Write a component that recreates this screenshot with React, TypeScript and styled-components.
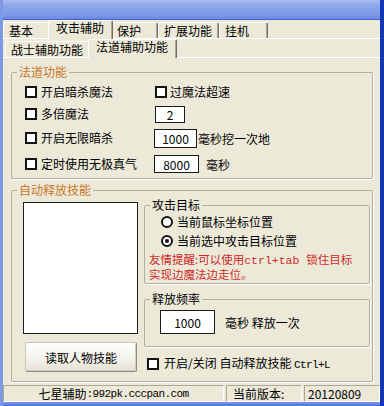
import React from "react";
import styled, { createGlobalStyle } from "styled-components";

const CJK = `"Noto Sans CJK SC", "Noto Sans", sans-serif`;
const MONO = `"Liberation Mono", "DejaVu Sans Mono", monospace`;

const GlobalStyle = createGlobalStyle`
  html, body { margin: 0; padding: 0; background: #ece9d8; }
  body { font-family: ${CJK}; font-size: 12px; color: #000; }
  * { box-sizing: border-box; }
`;

const Window = styled.div`
  width: 384px;
  height: 406px;
  display: flex;
  flex-direction: column;
  background: #ece9d8;
  border-left: 3px solid #7d98e4;
  border-right: 4px solid #1236b4;
  overflow: hidden;
`;

const TitleStrip = styled.div`
  height: 20px;
  flex: none;
  background: linear-gradient(#abbef2 0%, #8fa9ec 25%, #7d9ae8 75%, #6a8ae2 100%);
  border-bottom: 1px solid #4466d4;
`;

const TabRow = styled.div<{ $sub?: boolean }>`
  height: 19px;
  flex: none;
  display: flex;
  align-items: flex-end;
  padding-left: ${(p) => (p.$sub ? 2 : 0)}px;
  border-bottom: 1px solid #fff;
`;

const Tab = styled.div<{ $active?: boolean; $min: number }>`
  position: relative;
  z-index: ${(p) => (p.$active ? 2 : 1)};
  min-width: ${(p) => p.$min + (p.$active ? 4 : 0)}px;
  height: ${(p) => (p.$active ? 19 : 16)}px;
  margin: 0 ${(p) => (p.$active ? -2 : 0)}px ${(p) => (p.$active ? -1 : 0)}px;
  padding: 0 ${(p) => (p.$active ? 8 : 6)}px 0 ${(p) => (p.$active ? 7 : 5)}px;
  background: #ece9d8;
  border-top: 1px solid #fff;
  border-left: 1px solid #fff;
  border-right: 1px solid #716f64;
  box-shadow: inset -1px 0 #aca899;
  border-radius: 2px 2px 0 0;
  line-height: ${(p) => (p.$active ? 14 : 15)}px;
  white-space: nowrap;
`;

const Content = styled.div`
  flex: 1;
  display: flex;
  flex-direction: column;
  gap: 4px;
  padding: 7px 7px 1px 8px;
  min-height: 0;
`;

const Group = styled.fieldset<{ $grow?: boolean }>`
  margin: 0;
  padding: 0;
  min-width: 0;
  border: 1px solid #b4b09f;
  border-radius: 2px;
  box-shadow: 1px 1px 0 #fff;
  flex: ${(p) => (p.$grow ? "1" : "none")};
  display: flex;
  flex-direction: column;
`;

const Legend = styled.legend<{ $accent?: boolean }>`
  margin-left: 5px;
  padding: 0 2px;
  line-height: 14px;
  font-size: 12px;
  color: ${(p) => (p.$accent ? "#c7762a" : "#000")};
`;

const MagicGrid = styled.div`
  display: grid;
  grid-template-columns: 130px auto;
  grid-template-rows: 22px 22px 26px 26px;
  padding: 2px 0 1px 13px;
`;

const Cell = styled.div<{ $gap?: number; $shift?: number }>`
  display: flex;
  align-items: center;
  gap: ${(p) => p.$gap ?? 0}px;
  margin-left: ${(p) => p.$shift ?? 0}px;
`;

const CheckLabel = styled.label<{ $gap?: number }>`
  display: flex;
  align-items: center;
  gap: ${(p) => p.$gap ?? 4}px;
  line-height: 14px;
  white-space: nowrap;
`;

const Box = styled.span`
  width: 12px;
  height: 12px;
  flex: none;
  background: #fff;
  border: 2px solid #141414;
`;

const RadioDot = styled.span<{ $on?: boolean }>`
  width: 12px;
  height: 12px;
  flex: none;
  border-radius: 50%;
  border: 2px solid #141414;
  background: #fff;
  display: flex;
  align-items: center;
  justify-content: center;
  &::after {
    content: "";
    width: 4px;
    height: 4px;
    border-radius: 50%;
    background: ${(p) => (p.$on ? "#141414" : "transparent")};
  }
`;

const NumInput = styled.input<{ $w: number; $h: number }>`
  width: ${(p) => p.$w}px;
  height: ${(p) => p.$h}px;
  padding: 0;
  margin: 0;
  border: 1px solid #1a1a1a;
  background: #fff;
  text-align: center;
  font-family: ${CJK};
  font-size: 12px;
  color: #000;
  outline: none;
`;

const AutoBody = styled.div`
  flex: 1;
  display: grid;
  grid-template-columns: 115px 1fr;
  column-gap: 6px;
  padding: 1px 2px 0 11px;
`;

const LeftCol = styled.div`
  display: flex;
  flex-direction: column;
  padding-top: 4px;
  gap: 8px;
`;

const ListBox = styled.div`
  height: 132px;
  background: #fff;
  border: 1px solid #1e1e1e;
`;

const Button = styled.button`
  height: 30px;
  margin: 0 1px 0 2px;
  font-family: ${CJK};
  font-size: 12px;
  color: #000;
  background: linear-gradient(#fdfdfb, #f3f2ec 55%, #e4e1d3);
  border: 1px solid #c9c6b6;
  border-right-color: #8d8a7c;
  border-bottom-color: #8d8a7c;
  border-radius: 2px;
  box-shadow: inset -1px -1px #d2cebe;
  padding: 0;
`;

const RightCol = styled.div`
  display: flex;
  flex-direction: column;
`;

const TargetBody = styled.div`
  padding: 0 0 3px 4px;
  display: flex;
  flex-direction: column;
`;

const RadioRow = styled.label`
  height: 19px;
  display: flex;
  align-items: center;
  gap: 4px;
  padding-left: 12px;
  line-height: 14px;
`;

const Hint = styled.div`
  margin-top: 3px;
  line-height: 12.5px;
  color: #d02a2a;
  font-size: 11.5px;
`;

const Mono = styled.span<{ $size?: number; $ls?: number }>`
  font-family: ${MONO};
  font-size: ${(p) => p.$size ?? 11}px;
  letter-spacing: ${(p) => p.$ls ?? -0.6}px;
`;

const FreqGroup = styled(Group)`
  margin-top: 8px;
`;

const FreqBody = styled.div`
  display: flex;
  align-items: center;
  gap: 10px;
  padding: 4px 0 12px 15px;
  white-space: nowrap;
`;

const BottomCheck = styled.div`
  margin-top: 7px;
  height: 20px;
  display: flex;
  align-items: center;
  padding-left: 3px;
`;

const StatusBar = styled.div`
  height: 19px;
  flex: none;
  display: flex;
  gap: 2px;
  padding-top: 2px;
`;

const Pane = styled.div<{ $w: number; $align?: string; $pl?: number }>`
  width: ${(p) => p.$w}px;
  height: 17px;
  display: flex;
  align-items: center;
  justify-content: ${(p) => p.$align ?? "flex-start"};
  padding-left: ${(p) => p.$pl ?? 0}px;
  border: 1px solid;
  border-color: #aca899 #fff #fff #aca899;
  line-height: 14px;
  white-space: nowrap;
`;

const BottomEdge = styled.div`
  height: 4px;
  flex: none;
  background: linear-gradient(#7f9ce8, #4b70dc);
`;

const Check = ({ label, gap }: { label: React.ReactNode; gap?: number }) => (
  <CheckLabel $gap={gap}>
    <Box />
    <span>{label}</span>
  </CheckLabel>
);

export default function App() {
  return (
    <>
      <GlobalStyle />
      <Window>
        <TitleStrip />
        <TabRow>
          <Tab $min={47}>基本</Tab>
          <Tab $min={47} $active>攻击辅助</Tab>
          <Tab $min={47}>保护</Tab>
          <Tab $min={47}>扩展功能</Tab>
          <Tab $min={49}>挂机</Tab>
        </TabRow>
        <TabRow $sub>
          <Tab $min={83}>战士辅助功能</Tab>
          <Tab $min={83} $active>法道辅助功能</Tab>
        </TabRow>
        <Content>
          <Group>
            <Legend $accent>法道功能</Legend>
            <MagicGrid>
              <Cell><Check label="开启暗杀魔法" /></Cell>
              <Cell><Check label="过魔法超速" gap={3} /></Cell>
              <Cell><Check label="多倍魔法" /></Cell>
              <Cell><NumInput $w={30} $h={17} value="2" readOnly /></Cell>
              <Cell><Check label="开启无限暗杀" /></Cell>
              <Cell $gap={1} $shift={-1}>
                <NumInput $w={43} $h={19} value="1000" readOnly />
                <span>毫秒挖一次地</span>
              </Cell>
              <Cell><Check label="定时使用无极真气" /></Cell>
              <Cell $gap={7} $shift={-1}>
                <NumInput $w={45} $h={18} value="8000" readOnly />
                <span>毫秒</span>
              </Cell>
            </MagicGrid>
          </Group>
          <Group $grow>
            <Legend $accent>自动释放技能</Legend>
            <AutoBody>
              <LeftCol>
                <ListBox />
                <Button>读取人物技能</Button>
              </LeftCol>
              <RightCol>
                <Group>
                  <Legend>攻击目标</Legend>
                  <TargetBody>
                    <RadioRow>
                      <RadioDot />
                      <span>当前鼠标坐标位置</span>
                    </RadioRow>
                    <RadioRow>
                      <RadioDot $on />
                      <span>当前选中攻击目标位置</span>
                    </RadioRow>
                    <Hint>
                      友情提醒:可以使用<Mono $size={11.5} $ls={0}>ctrl+tab </Mono>锁住目标
                      <br />
                      实现边魔法边走位。
                    </Hint>
                  </TargetBody>
                </Group>
                <FreqGroup>
                  <Legend>释放频率</Legend>
                  <FreqBody>
                    <NumInput $w={55} $h={24} value="1000" readOnly />
                    <span>毫秒 释放一次</span>
                  </FreqBody>
                </FreqGroup>
                <BottomCheck>
                  <Check
                    gap={5}
                    label={
                      <>
                        开启/关闭 自动释放技能 <Mono>Ctrl+L</Mono>
                      </>
                    }
                  />
                </BottomCheck>
              </RightCol>
            </AutoBody>
          </Group>
        </Content>
        <StatusBar>
          <Pane $w={221} $align="center">
            七星辅助<Mono>:992pk.cccpan.com</Mono>
          </Pane>
          <Pane $w={76} $pl={6}>当前版本:</Pane>
          <Pane $w={76} $pl={3}>20120809</Pane>
        </StatusBar>
        <BottomEdge />
      </Window>
    </>
  );
}
